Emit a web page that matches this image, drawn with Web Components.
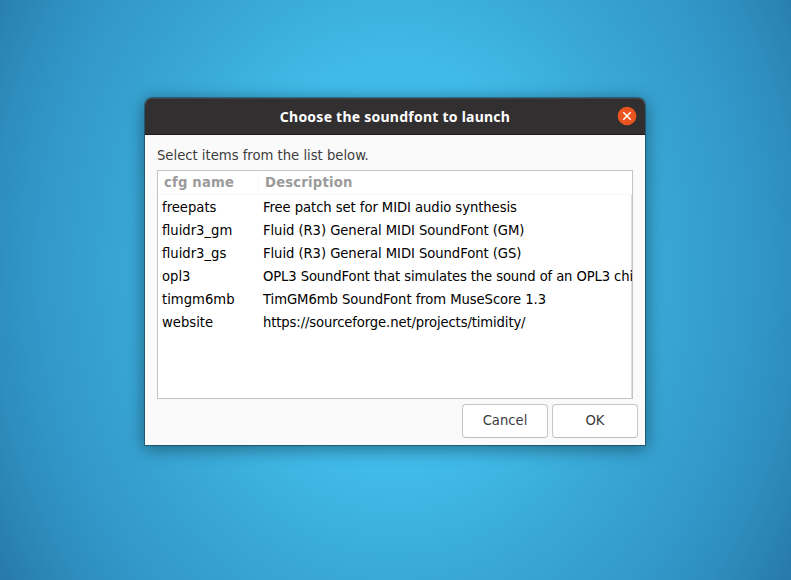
<!DOCTYPE html>
<html lang="en">
<head>
<meta charset="UTF-8">
<title>Choose the soundfont to launch</title>
<style>
    body {
        margin: 0;
        height: 580px;
        overflow: hidden;
        font-family: "DejaVu Sans Condensed", "DejaVu Sans", sans-serif;
        font-stretch: condensed;
        font-size: 14.67px;
        color: #3d3d3d;
    }
    .tight {
        --spacing: -.12px;
    }
</style>
</head>
<body>
<desk-top>
    <dialog-window title="Choose the soundfont to launch">
        <span>Select items from the list below.</span>
        <list-view first="cfg name" second="Description">
            <list-row name="freepats">Free patch set for MIDI audio synthesis</list-row>
            <list-row name="fluidr3_gm">Fluid (R3) General MIDI SoundFont (GM)</list-row>
            <list-row name="fluidr3_gs">Fluid (R3) General MIDI SoundFont (GS)</list-row>
            <list-row name="opl3" class="tight">OPL3 SoundFont that simulates the sound of an OPL3 chi</list-row>
            <list-row name="timgm6mb">TimGM6mb SoundFont from MuseScore 1.3</list-row>
            <list-row name="website" class="tight">https://sourceforge.net/projects/timidity/</list-row>
        </list-view>
        <dialog-button slot="actions">Cancel</dialog-button>
        <dialog-button slot="actions">OK</dialog-button>
    </dialog-window>
</desk-top>
<script>
customElements.define("desk-top", class DeskTop extends HTMLElement{
    constructor(){
        super()
        this.shadow = this.attachShadow({mode: "open"})
        this.shadow.innerHTML = `
            <style>
            :host {
                display: flex;
                justify-content: center;
                box-sizing: border-box;
                height: 580px;
                padding: 98px 1px 0 0;
                background: radial-gradient(ellipse 468px 574px at 395px 268px, #48cbf8 0%, #40bae8 36%, #39a9d8 54%, #3298c9 76%, #2e8ebd 86%, #277aab 100%);
            }
            </style>
            <slot></slot>
        `
    }
})

customElements.define("dialog-window", class DialogWindow extends HTMLElement{
    constructor(){
        super()
        this.shadow = this.attachShadow({mode: "open"})
        this.shadow.innerHTML = `
            <style>
            :host {
                display: flex;
                flex-direction: column;
                width: 500px;
                height: 347px;
                background-color: #fafafa;
                border-radius: 7px 7px 0 0;
                box-shadow: 0 0 0 1px rgba(0,0,0,.3), 0 3px 17px 1px rgba(0,0,0,.42);
            }
            header {
                box-sizing: border-box;
                height: 37px;
                display: grid;
                grid-template-columns: 36px 1fr 36px;
                align-items: center;
                background-color: #322f30;
                border-radius: 7px 7px 0 0;
                border-bottom: 1px solid #1c1a1b;
                box-shadow: inset 0 1px #454243;
                .title {
                    font-family: "Noto Sans", sans-serif;
                    font-size: 14px;
                    font-stretch: normal;
                    letter-spacing: .24px;
                    color: #fff;
                    font-weight: bold;
                    text-align: center;
                    white-space: nowrap;
                }
                svg {
                    display: block;
                    justify-self: center;
                }
            }
            main {
                height: 264px;
                padding: 0 12px;
                display: flex;
                flex-direction: column;
                ::slotted(span) {
                    height: 35px;
                    line-height: 40px;
                }
            }
            footer {
                display: flex;
                justify-content: flex-end;
                gap: 4px;
                padding: 5px 7px 0 0;
            }
            </style>
            <header>
                <span></span>
                <span class="title">${this.getAttribute("title")}</span>
                <svg width="20" height="20" viewBox="0 0 20 20">
                    <circle cx="10" cy="10" r="9.3" fill="#e95420"/>
                    <path d="M6.3 6.3L13.7 13.7M13.7 6.3L6.3 13.7" stroke="#fff" stroke-width="1.5"/>
                </svg>
            </header>
            <main><slot></slot></main>
            <footer><slot name="actions"></slot></footer>
        `
        this.removeAttribute("title")
    }
})

customElements.define("list-view", class ListView extends HTMLElement{
    constructor(){
        super()
        this.shadow = this.attachShadow({mode: "open"})
        this.shadow.innerHTML = `
            <style>
            :host {
                display: block;
                box-sizing: border-box;
                height: 229px;
                border: 1px solid #c3c3c3;
                background-color: #fff;
                overflow: hidden;
            }
            .head {
                display: grid;
                grid-template-columns: 101px 1fr;
                height: 23px;
                line-height: 21px;
                font-weight: bold;
                letter-spacing: .2px;
                color: #9b9b9b;
                border-bottom: 1px solid #f7f7f7;
                span {
                    padding-left: 6px;
                }
                span:first-child {
                    border-right: 1px solid #fafafa;
                }
            }
            .rows {
                height: 203px;
                box-sizing: border-box;
                border-right: 1px solid #dedede;
            }
            </style>
            <div class="head">
                <span>${this.getAttribute("first")}</span>
                <span>${this.getAttribute("second")}</span>
            </div>
            <div class="rows"><slot></slot></div>
        `
    }
})

customElements.define("list-row", class ListRow extends HTMLElement{
    constructor(){
        super()
        this.shadow = this.attachShadow({mode: "open"})
        this.shadow.innerHTML = `
            <style>
            :host {
                display: grid;
                grid-template-columns: 101px 1fr;
                height: 23px;
                line-height: 23px;
                padding-left: 4px;
                color: #000;
                white-space: nowrap;
            }
            .desc {
                letter-spacing: var(--spacing, -.065px);
            }
            </style>
            <span>${this.getAttribute("name")}</span>
            <span class="desc"><slot></slot></span>
        `
    }
})

customElements.define("dialog-button", class DialogButton extends HTMLElement{
    constructor(){
        super()
        this.shadow = this.attachShadow({mode: "open"})
        this.shadow.innerHTML = `
            <style>
            :host {
                display: block;
            }
            button {
                display: block;
                box-sizing: border-box;
                width: 86px;
                height: 34px;
                padding: 0 0 3px;
                font: inherit;
                color: inherit;
                background-color: #fff;
                border: 1px solid #c6c6c6;
                border-bottom-color: #bcbcbc;
                border-radius: 4px;
            }
            </style>
            <button><slot></slot></button>
        `
    }
})
</script>
</body>
</html>
